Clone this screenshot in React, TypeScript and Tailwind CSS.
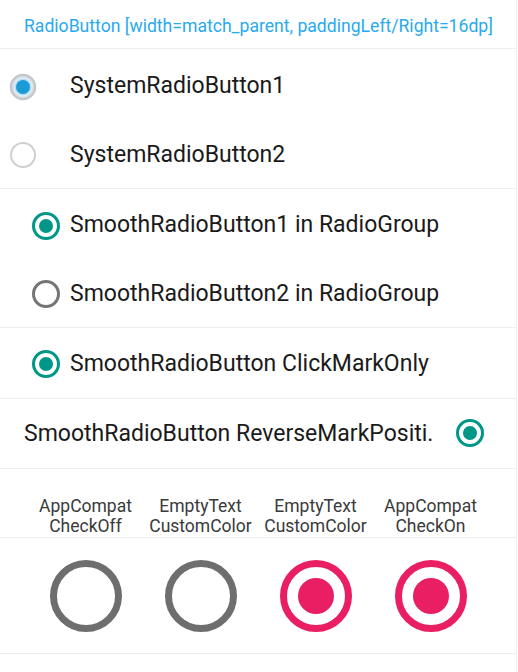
import React from "react";

function SysRadio({ checked }: { checked: boolean }) {
  return (
    <svg width="30" height="30" viewBox="0 0 30 30">
      <defs>
        <radialGradient id="sysg" cx="50%" cy="50%" r="50%">
          <stop offset="70%" stopColor="#e3f2fb" />
          <stop offset="100%" stopColor="#bdbdbd" />
        </radialGradient>
      </defs>
      {checked ? (
        <>
          <circle cx="15" cy="15" r="12.5" fill="url(#sysg)" stroke="#c4c4c4" strokeWidth="1.5" />
          <circle cx="15" cy="15" r="8.5" fill="#b3dff5" />
          <circle cx="15" cy="15" r="7" fill="#1a9ad6" />
        </>
      ) : (
        <circle cx="15" cy="15" r="12" fill="#ffffff" stroke="#cfcfcf" strokeWidth="2" />
      )}
    </svg>
  );
}

function SmoothRadio({ checked, size = 30, color = "#009688", off = "#757575", stroke = 3, dot = 7 }: { checked: boolean; size?: number; color?: string; off?: string; stroke?: number; dot?: number }) {
  const c = size / 2;
  const r = c - stroke / 2 - 1;
  return (
    <svg width={size} height={size} viewBox={`0 0 ${size} ${size}`}>
      <circle cx={c} cy={c} r={r} fill="none" stroke={checked ? color : off} strokeWidth={stroke} />
      {checked && <circle cx={c} cy={c} r={dot} fill={color} />}
    </svg>
  );
}

const rowText = "text-[23px] text-[#1a1a1a]";

export default function App() {
  return (
    <div
      className="w-[517px] h-[672px] bg-white border-r border-[#ececec] flex flex-col"
      style={{ fontFamily: "Roboto, 'Noto Sans', sans-serif" }}
    >
      <div className="h-[49px] flex items-center pl-[24px] pt-[5px] text-[17.6px] text-[#29aaf0] border-b border-[#eeeeee]">
        RadioButton [width=match_parent, paddingLeft/Right=16dp]
      </div>

      <div className="h-[140px] flex flex-col pt-[2px] border-b border-[#eeeeee]">
        <div className="h-[72px] flex items-center">
          <div className="w-[70px] pl-[8px] flex items-center">
            <SysRadio checked={true} />
          </div>
          <span className={rowText}>SystemRadioButton1</span>
        </div>
        <div className="h-[66px] flex items-center">
          <div className="w-[70px] pl-[8px] flex items-center">
            <SysRadio checked={false} />
          </div>
          <span className={rowText}>SystemRadioButton2</span>
        </div>
      </div>

      <div className="h-[139px] flex flex-col pt-[1px] border-b border-[#eeeeee]">
        <div className="h-[72px] flex items-center pl-[31px] gap-[9px]">
          <SmoothRadio checked={true} />
          <span className={rowText}>SmoothRadioButton1 in RadioGroup</span>
        </div>
        <div className="h-[66px] flex items-center pl-[31px] gap-[9px]">
          <SmoothRadio checked={false} />
          <span className={rowText}>SmoothRadioButton2 in RadioGroup</span>
        </div>
      </div>

      <div className="h-[71px] flex items-center pl-[31px] pt-[2px] gap-[9px] border-b border-[#eeeeee]">
        <SmoothRadio checked={true} />
        <span className={rowText}>SmoothRadioButton ClickMarkOnly</span>
      </div>

      <div className="h-[70px] flex items-center pl-[24px] pr-[31px] pt-[2px] justify-between border-b border-[#eeeeee]">
        <span className={rowText}>SmoothRadioButton ReverseMarkPositi.</span>
        <div className="-mt-[3px]">
          <SmoothRadio checked={true} />
        </div>
      </div>

      <div className="h-[69px] grid grid-cols-4 px-[28px] items-end pb-[1px] border-b border-[#eeeeee] text-[17.5px] text-[#3a3a3a] leading-[20px] text-center">
        <div>AppCompat<br />CheckOff</div>
        <div>EmptyText<br />CustomColor</div>
        <div>EmptyText<br />CustomColor</div>
        <div>AppCompat<br />CheckOn</div>
      </div>

      <div className="h-[116px] grid grid-cols-4 px-[28px] items-center justify-items-center border-b border-[#eeeeee]">
        <SmoothRadio checked={false} size={74} stroke={7} off="#6e6e6e" />
        <SmoothRadio checked={false} size={74} stroke={7} off="#6e6e6e" />
        <SmoothRadio checked={true} size={74} stroke={7} color="#e91e63" dot={18} />
        <SmoothRadio checked={true} size={74} stroke={7} color="#e91e63" dot={18} />
      </div>
    </div>
  );
}
